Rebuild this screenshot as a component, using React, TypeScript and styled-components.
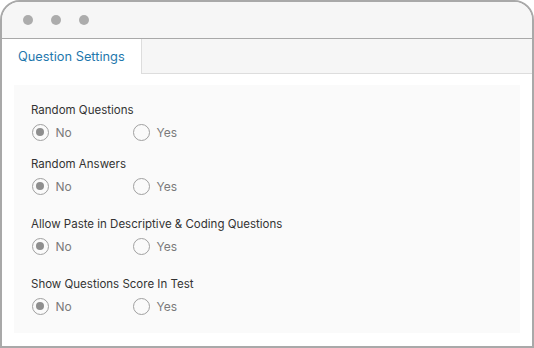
import styled, { createGlobalStyle } from 'styled-components';

const GlobalStyle = createGlobalStyle`
  html, body {
    margin: 0;
    padding: 0;
    background: #ffffff;
  }
  body {
    font-family: Inter, "Open Sans", "Liberation Sans", sans-serif;
  }
`;

type Setting = { label: string; value: 'No' | 'Yes'; gap: number };

const SETTINGS: Setting[] = [
  { label: 'Random Questions', value: 'No', gap: 0 },
  { label: 'Random Answers', value: 'No', gap: 15 },
  { label: 'Allow Paste in Descriptive & Coding Questions', value: 'No', gap: 21 },
  { label: 'Show Questions Score In Test', value: 'No', gap: 21 }
];

export default function App() {
  return (
    <>
      <GlobalStyle />
      <Frame>
        <TitleBar>
          <Dot />
          <Dot />
          <Dot />
        </TitleBar>
        <TabBar>
          <Tab active>Question Settings</Tab>
        </TabBar>
        <Body>
          <Panel>
            {SETTINGS.map(({ label, value, gap }) => (
              <Group key={label} gap={gap}>
                <Label>{label}</Label>
                <Options>
                  {(['No', 'Yes'] as const).map(opt => (
                    <Option key={opt}>
                      <RadioCircle checked={opt === value} />
                      <OptionText>{opt}</OptionText>
                    </Option>
                  ))}
                </Options>
              </Group>
            ))}
          </Panel>
        </Body>
      </Frame>
    </>
  );
}

const Frame = styled.div`
  width: 534px;
  height: 348px;
  box-sizing: border-box;
  border: 2px solid #a9a9a9;
  border-radius: 20px 20px 0 0;
  overflow: hidden;
  background: #ffffff;
  display: flex;
  flex-direction: column;
`;

const TitleBar = styled.div`
  height: 36px;
  flex: none;
  background: #f6f6f6;
  border-bottom: 1px solid #a9a9a9;
  display: flex;
  align-items: center;
  gap: 18px;
  padding-left: 21px;
`;

const Dot = styled.span`
  width: 10px;
  height: 10px;
  border-radius: 50%;
  background: #acacac;
`;

const TabBar = styled.div`
  height: 35px;
  flex: none;
  box-sizing: border-box;
  background: #f6f6f6;
  border-bottom: 1px solid #dddddd;
  display: flex;
`;

type TabProps = { active?: boolean };
const Tab = styled.div<TabProps>`
  width: 140px;
  height: 35px;
  box-sizing: border-box;
  background: ${props => (props.active ? '#ffffff' : 'transparent')};
  border-right: 1px solid #dddddd;
  color: #1f78ad;
  font-size: 12.8px;
  padding-left: 16px;
  display: flex;
  align-items: center;
`;

const Body = styled.div`
  flex: 1;
  padding: 11px 12px 13px 12px;
  display: flex;
`;

const Panel = styled.div`
  flex: 1;
  background: #fafafa;
  padding: 17px 17px 18px;
  display: flex;
  flex-direction: column;
`;

type GroupProps = { gap: number };
const Group = styled.div<GroupProps>`
  margin-top: ${props => props.gap}px;
  display: flex;
  flex-direction: column;
  gap: 5px;
`;

const Label = styled.div`
  font-size: 11.5px;
  line-height: 16px;
  color: #333333;
`;

const Options = styled.div`
  display: flex;
  height: 18px;
`;

const Option = styled.label`
  width: 101px;
  display: flex;
  align-items: center;
  gap: 7px;
`;

type RadioProps = { checked: boolean };
const RadioCircle = styled.span<RadioProps>`
  width: 17px;
  height: 17px;
  box-sizing: border-box;
  border-radius: 50%;
  border: 1px solid #a0a0a0;
  margin-left: 0.5px;
  display: flex;
  align-items: center;
  justify-content: center;
  &::after {
    content: '';
    width: 8px;
    height: 8px;
    border-radius: 50%;
    background: #8e8e8e;
    display: ${props => (props.checked ? 'block' : 'none')};
  }
`;

const OptionText = styled.span`
  font-size: 12px;
  color: #7a7a7a;
`;
